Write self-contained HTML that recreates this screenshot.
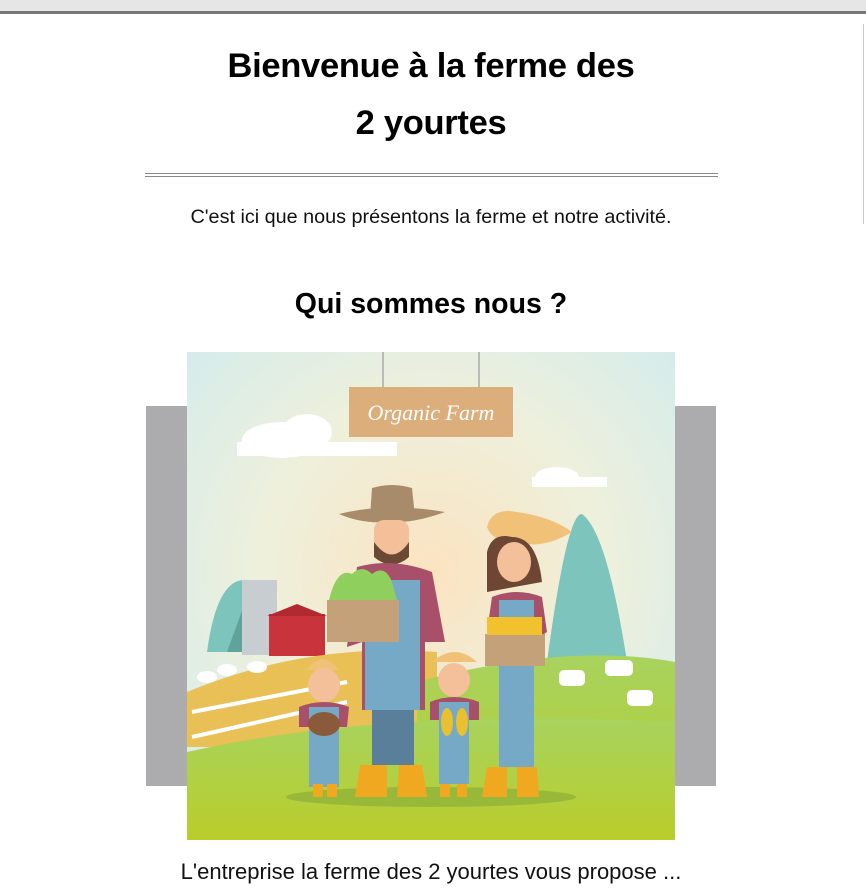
<!DOCTYPE html>
<html><head><meta charset="utf-8"><style>
html,body{margin:0;padding:0;background:#fff;}
body{width:866px;height:893px;position:relative;overflow:hidden;font-family:"Liberation Sans",sans-serif;}
.topbar{position:absolute;left:0;top:0;width:866px;height:11px;background:#e6e6e6;border-bottom:3px solid #777;}
.sb{position:absolute;left:863px;top:24px;width:1px;height:200px;background:#ccc;}
h1{position:absolute;left:0;width:862px;top:38px;margin:0;text-align:center;font-size:34.5px;line-height:57px;font-weight:bold;color:#000;letter-spacing:-0.3px;}
.hr{position:absolute;left:145px;width:573px;top:173px;border-top:1px solid #888;border-bottom:1px solid #888;height:2px;}
.p1{position:absolute;left:0;width:862px;top:206px;text-align:center;font-size:19.8px;color:#111;}
h2{position:absolute;left:0;width:862px;top:288px;margin:0;text-align:center;font-size:28.5px;font-weight:bold;}
.gray{position:absolute;left:146px;top:406px;width:570px;height:380px;background:#acabae;}
svg.ill{position:absolute;left:187px;top:352px;}
.p2{position:absolute;left:0;width:862px;top:859px;text-align:center;font-size:22px;color:#111;}
</style></head><body>
<div class="topbar"></div><div class="sb"></div>
<h1>Bienvenue à la ferme des<br>2 yourtes</h1>
<div class="hr"></div>
<div class="p1">C'est ici que nous présentons la ferme et notre activité.</div>
<h2>Qui sommes nous ?</h2>
<div class="gray"></div>
<svg class="ill" width="488" height="488" viewBox="0 0 488 488">
<defs>
<radialGradient id="sky" cx="0.5" cy="0.45" r="0.7"><stop offset="0" stop-color="#fbe3c0"/><stop offset="0.5" stop-color="#eef0dc"/><stop offset="1" stop-color="#d3ecec"/></radialGradient>
<linearGradient id="gr" x1="0" y1="0" x2="0" y2="1"><stop offset="0" stop-color="#a8d35e"/><stop offset="1" stop-color="#b9cd2a"/></linearGradient>
</defs>
<rect width="488" height="488" fill="url(#sky)"/>
<g fill="#fff"><ellipse cx="95" cy="88" rx="40" ry="18"/><ellipse cx="120" cy="80" rx="25" ry="18"/><rect x="50" y="90" width="160" height="14"/>
<ellipse cx="370" cy="125" rx="22" ry="10"/><rect x="345" y="125" width="75" height="10"/></g>
<line x1="196" y1="0" x2="196" y2="35" stroke="#888"/><line x1="292" y1="0" x2="292" y2="35" stroke="#888"/>
<rect x="162" y="35" width="164" height="50" fill="#dcae7c"/>
<text x="244" y="68" text-anchor="middle" font-family="Liberation Serif,serif" font-style="italic" font-size="22" fill="#fff">Organic Farm</text>
<path d="M20 300 Q30 225 60 228 Q85 230 90 300Z" fill="#7cc4bc"/>
<path d="M360 310 Q380 160 395 162 Q420 180 440 310Z" fill="#7cc4bc"/>
<path d="M40 300 L60 245 L80 300Z" fill="#5fa39b"/>
<rect x="55" y="228" width="35" height="75" fill="#c8cdd2"/>
<rect x="82" y="262" width="56" height="42" fill="#c9343c"/><path d="M80 264 L110 252 L140 264Z" fill="#b02a30"/>
<path d="M0 340 Q120 290 250 300 L250 395 L0 395Z" fill="#e8c055"/>
<path d="M230 330 Q380 290 488 310 L488 488 L230 488Z" fill="url(#gr)"/>
<path d="M0 400 Q200 355 488 370 L488 488 L0 488Z" fill="url(#gr)"/>
<path d="M5 360 L160 330 M5 385 L160 350" stroke="#fff" stroke-width="4"/>
<ellipse cx="244" cy="445" rx="145" ry="10" fill="#98b83a"/>
<path d="M152 162 Q200 150 258 160 Q225 172 200 170 Q175 172 152 162Z" fill="#a88b6a"/>
<path d="M183 165 L185 136 Q205 130 225 136 L228 165Z" fill="#a88b6a"/>
<rect x="187" y="168" width="35" height="42" rx="10" fill="#f3c09a"/>
<path d="M187 190 Q205 215 222 190 L222 205 Q205 220 187 205Z" fill="#6a4a35"/>
<path d="M170 215 Q205 205 245 220 L258 290 L238 290 L238 358 L175 358 L175 290 L160 295Z" fill="#a8506a"/>
<rect x="178" y="228" width="55" height="130" fill="#75a9c6"/>
<rect x="185" y="358" width="42" height="55" fill="#5a7f9a"/>
<path d="M173 413 L200 413 L200 445 L168 445Z M212 413 L235 413 L240 445 L210 445Z" fill="#f0a820"/>
<rect x="140" y="248" width="72" height="42" fill="#c4a178"/>
<path d="M142 248 Q150 215 165 222 Q175 212 185 222 Q198 212 205 230 L210 248Z" fill="#8fcf5e"/>
<path d="M300 175 Q305 155 330 160 Q365 165 385 180 Q355 198 330 190 Q305 190 300 175Z" fill="#f1c178"/>
<path d="M300 200 Q305 180 325 185 Q350 185 355 230 L300 240Z" fill="#6d4734"/>
<ellipse cx="327" cy="210" rx="17" ry="20" fill="#f3c09a"/>
<path d="M305 245 Q330 235 355 245 L360 280 L345 290 L345 415 L312 415 L312 290 L300 280Z" fill="#a8506a"/>
<rect x="312" y="248" width="35" height="167" fill="#75a9c6"/>
<path d="M300 415 L320 415 L320 445 L295 445Z M330 415 L350 415 L352 445 L330 445Z" fill="#f0a820"/>
<rect x="298" y="282" width="60" height="32" fill="#c4a178"/>
<rect x="300" y="265" width="55" height="18" fill="#f2c12e"/>
<path d="M120 318 Q135 296 152 318Z" fill="#f1c178"/>
<ellipse cx="137" cy="333" rx="16" ry="17" fill="#f3c09a"/>
<path d="M112 355 Q137 345 162 355 L160 375 L112 375Z" fill="#a8506a"/>
<rect x="122" y="355" width="30" height="80" fill="#75a9c6"/>
<ellipse cx="137" cy="372" rx="16" ry="12" fill="#8a5a3a"/>
<path d="M126 432 L136 432 L136 445 L126 445Z M140 432 L150 432 L150 445 L140 445Z" fill="#f0a820"/>
<path d="M245 310 Q268 290 290 310Z" fill="#f1c178"/>
<ellipse cx="267" cy="328" rx="16" ry="17" fill="#f3c09a"/>
<path d="M243 350 Q267 340 292 350 L292 368 L243 368Z" fill="#a8506a"/>
<rect x="252" y="350" width="30" height="82" fill="#75a9c6"/>
<ellipse cx="260" cy="370" rx="6" ry="14" fill="#e9c030"/><ellipse cx="275" cy="370" rx="6" ry="14" fill="#e9c030"/>
<path d="M253 432 L263 432 L263 445 L253 445Z M270 432 L280 432 L280 445 L270 445Z" fill="#f0a820"/>
<g fill="#fff"><rect x="372" y="318" width="26" height="16" rx="5"/><rect x="418" y="308" width="28" height="16" rx="5"/><rect x="440" y="338" width="26" height="16" rx="5"/>
<ellipse cx="40" cy="318" rx="10" ry="6"/><ellipse cx="70" cy="315" rx="10" ry="6"/><ellipse cx="20" cy="325" rx="10" ry="6"/></g>
</svg>
<div class="p2">L'entreprise la ferme des 2 yourtes vous propose ...</div>
</body></html>
